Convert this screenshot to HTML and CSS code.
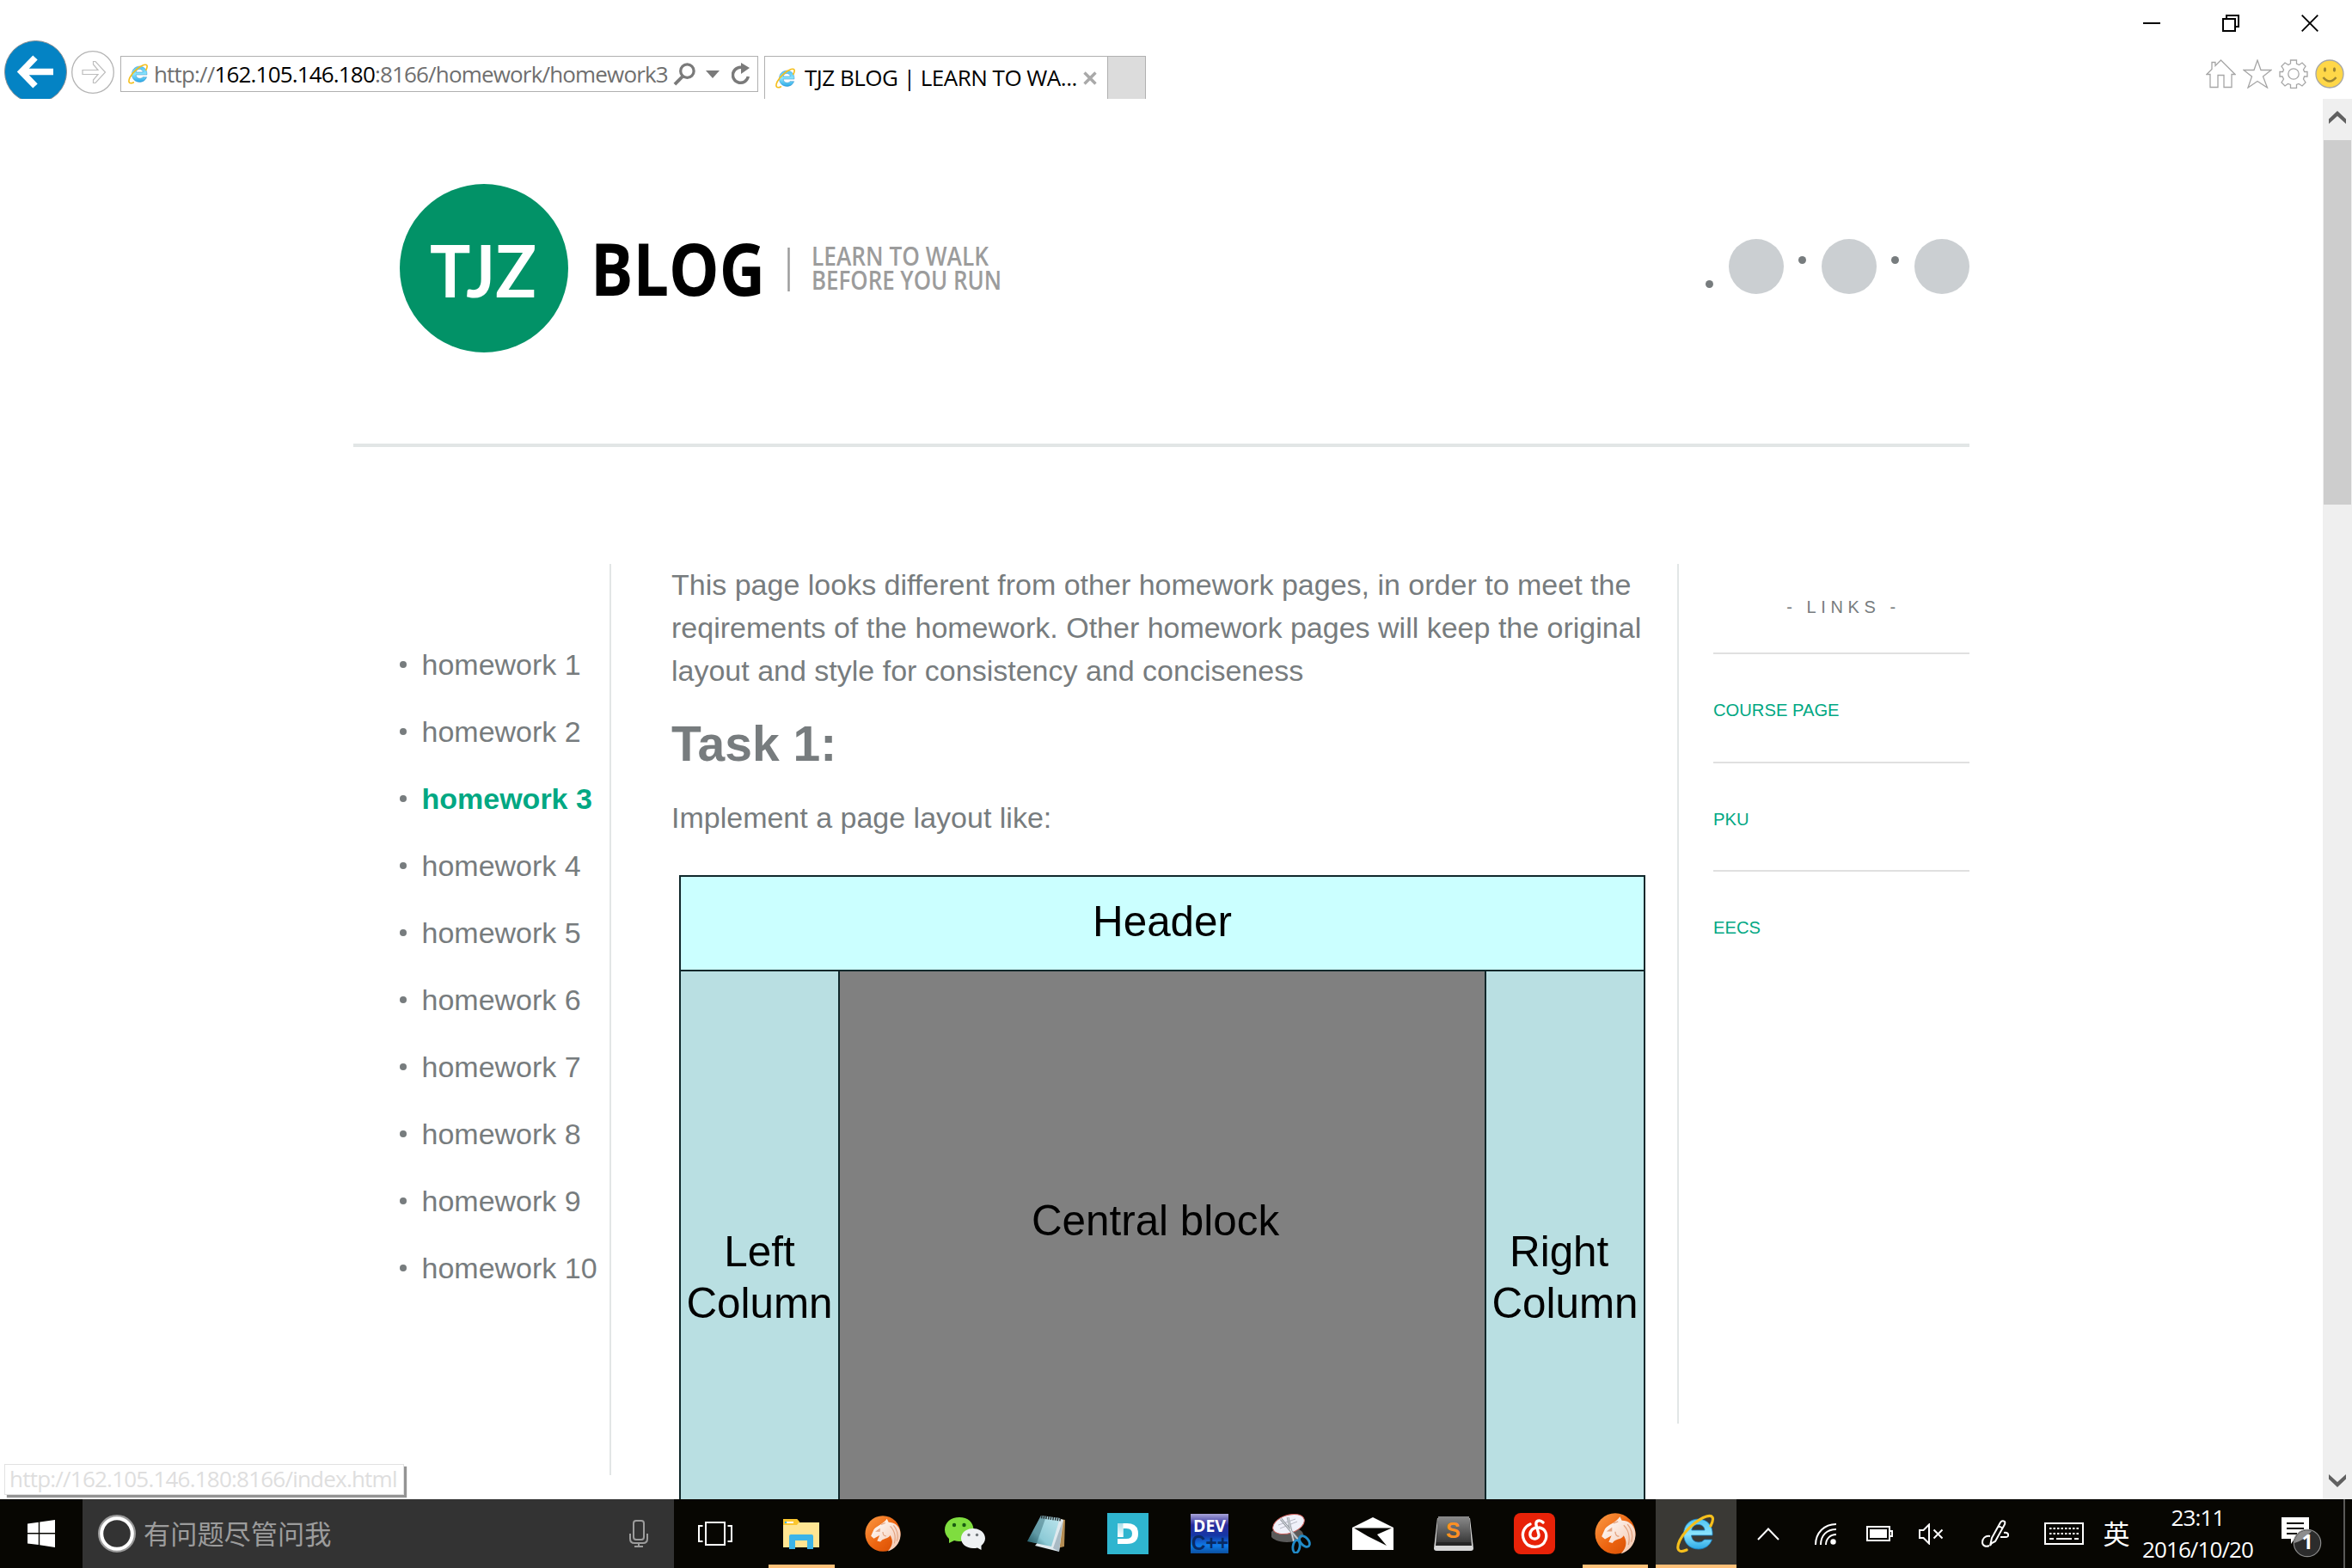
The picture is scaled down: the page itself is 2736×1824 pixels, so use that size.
FILE: index.html
```html
<!DOCTYPE html>
<html lang="en">
<head>
<meta charset="utf-8">
<title>TJZ BLOG | LEARN TO WALK BEFORE YOU RUN</title>
<link rel="stylesheet" href="styles.css">
</head>
<body>
<svg width="0" height="0" class="defs">
  <defs>
    <linearGradient id="ie-blue" x1="0" y1="0" x2="0" y2="1"><stop offset="0" stop-color="#4fc3f2"/><stop offset=".5" stop-color="#8be4fd"/><stop offset="1" stop-color="#2ba9e6"/></linearGradient>
    <linearGradient id="horse-bg" x1="0" y1="0" x2="1" y2="1"><stop offset="0" stop-color="#fb9b45"/><stop offset=".55" stop-color="#ec6410"/><stop offset="1" stop-color="#d34a02"/></linearGradient>
    <linearGradient id="mane" x1="0" y1="0" x2="1" y2="1"><stop offset="0" stop-color="#ffffff"/><stop offset="1" stop-color="#f3c3a8"/></linearGradient>
    <linearGradient id="note" x1="0" y1="1" x2="1" y2="0"><stop offset="0" stop-color="#1d5863"/><stop offset=".35" stop-color="#8ccad6"/><stop offset="1" stop-color="#bfe6ee"/></linearGradient>
    <linearGradient id="dev" x1="0" y1="0" x2="0" y2="1"><stop offset="0" stop-color="#a9a4d8"/><stop offset=".28" stop-color="#2b2b9c"/><stop offset=".55" stop-color="#1538a6"/><stop offset=".8" stop-color="#0f7be8"/><stop offset="1" stop-color="#0b4f9f"/></linearGradient>
    <linearGradient id="subl" x1="0" y1="0" x2="0" y2="1"><stop offset="0" stop-color="#8b8b8b"/><stop offset="1" stop-color="#3a3a3a"/></linearGradient>
    <linearGradient id="dgrad" x1="0" y1="0" x2="0" y2="1"><stop offset="0" stop-color="#a9dfea"/><stop offset="1" stop-color="#fff"/></linearGradient>
    <symbol id="ie" viewBox="0 0 46 46">
      <path d="M42 25H17.500C18 30 21 33 26 33C29 33 31 32 32.500 30H41.500C39 37 33 41 26 41C15.500 41 8.500 34 8.500 23.500C8.500 13 16 6 25.500 6C36 6 43 14 42 25ZM17.800 19H33C32.500 15 30 12.500 25.500 12.500C21 12.500 18.500 15 17.800 19Z" fill="url(#ie-blue)" stroke="#1b7fc0" stroke-width=".8"/>
      <path d="M40 14C45 4 42 1 35 3C25 6 10 19 4 31C-1 42 3 46 12 42" fill="none" stroke="#f5bf1c" stroke-width="3.200" stroke-linecap="round"/>
    </symbol>
    <symbol id="horse" viewBox="0 0 44 44">
      <ellipse cx="22" cy="22" rx="21.500" ry="21.800" fill="url(#horse-bg)"/>
      <path d="M27 4L29 8C38 8 44 15 43.500 24C43 34 36 41 28 43.500C34 37 35 31 31 24C28 29 22 27 19 32L15 31L18 24L11 28L7.500 25L11 17C15 12 22 11 27 4Z" fill="url(#mane)"/>
      <path d="M14.500 19l3.500-2.500v2.500zM20 11L25 9M31 13C36 18 38 26 36 34M35 12C40 18 41 25 39 31M22 20C22 23 23 25 26 25" fill="none" stroke="#e3a380" stroke-width="1.200"/>
    </symbol>
  </defs>
</svg>

<header class="chrome">
  <div class="caption">
    <svg class="win" viewBox="0 0 20 20"><path d="M0 10h20" stroke="#000" stroke-width="2"/></svg>
    <svg class="win" viewBox="0 0 20 20"><path d="M1 5h14v14H1zM5 5V1h14v13h-4" fill="none" stroke="#000" stroke-width="2"/></svg>
    <svg class="win" viewBox="0 0 20 20"><path d="M.7.7l18.600 18.600M19.300.7L.7 19.300" stroke="#000" stroke-width="1.800"/></svg>
  </div>
  <div class="navrow">
    <svg class="back" viewBox="0 0 73 73"><circle cx="36.500" cy="36.500" r="36" fill="#0483c4" stroke="#8a8f92"/><path d="M57 36.500H20M36 20L20 36.500L36 53" fill="none" stroke="#fff" stroke-width="7.500"/></svg>
    <svg class="forward" viewBox="0 0 50 50"><circle cx="25" cy="25" r="24.300" fill="#fff" stroke="#b4b4b4" stroke-width="1.300"/><path d="M13 22.500H31L25.500 16V12.500H28L39.500 25L28 37.500H25.500V34L31 27.500H13Z" fill="#fff" stroke="#bdbdbd" stroke-width="1.200"/></svg>
    <div class="address">
      <svg class="fav" viewBox="0 0 46 46"><use href="#ie"/></svg>
      <span class="url">http://<b>162.105.146.180</b>:8166/homework/homework3</span>
      <svg class="search" viewBox="0 0 28 28"><circle cx="17" cy="10" r="8" fill="none" stroke="#7a7a7a" stroke-width="3.400"/><path d="M12 16L2 26" stroke="#7a7a7a" stroke-width="4"/></svg>
      <svg class="caret" viewBox="0 0 16 9"><path d="M0 0h16L8 9z" fill="#7a7a7a"/></svg>
      <svg class="reload" viewBox="0 0 22 26"><path d="M14 6A9 9 0 1 0 19.300 16" fill="none" stroke="#7a7a7a" stroke-width="3.500"/><path d="M11 0L21 6L11 13z" fill="#7a7a7a"/></svg>
    </div>
    <div class="tab">
      <svg class="fav" viewBox="0 0 46 46"><use href="#ie"/></svg>
      <span class="tabtitle">TJZ BLOG | LEARN TO WA...</span>
      <svg class="tabx" viewBox="0 0 16 16"><path d="M1.500 1.500l13 13M14.500 1.500l-13 13" stroke="#a9a9a9" stroke-width="3.400"/></svg>
    </div>
    <div class="newtab"></div>
    <div class="tools">
      <svg width="35" height="34" viewBox="0 0 35 34"><path d="M17.500 1L34 17.500H30V32.500H21V18.500H14V32.500H5V17.500H1L7 11.500V3.500H11V7.500Z"/></svg>
      <svg width="34" height="34" viewBox="0 0 34 34"><path d="M17 1L21 12.500H33L23.500 20L28.500 33L17 25.500L6 33L10.500 20L1 12.500H13Z"/></svg>
      <svg width="34" height="34" viewBox="0 0 34 34"><path d="M13.500 1h7v4l3 1.500 3.500-2.500 4 4-2.500 4 1.200 2.500H33v5.500h-3.500l-1 3 2.500 4-4 4-4-2.500-2.500 1v4h-7v-4l-3-1-3.500 2.500-4-4 2.500-4-1.500-3H1v-5.500h3.500L5.500 12 3 8l4-4 4 2.500 2.500-1.500z"/><circle cx="17" cy="17" r="6.200"/></svg>
      <svg width="34" height="34" viewBox="0 0 34 34"><circle cx="17" cy="17" r="16" class="face"/><path d="M9.500 21Q17 30 24.500 21" class="smile"/><ellipse cx="11.500" cy="12" rx="1.600" ry="2.800" class="eye"/><ellipse cx="22.500" cy="12" rx="1.600" ry="2.800" class="eye"/></svg>
    </div>
  </div>
</header>

<div class="viewport">
  <div class="page">
    <header class="masthead">
      <svg class="logo" viewBox="0 0 710 196" width="710" height="196">
        <circle cx="98" cy="98" r="98" fill="#029267"/>
        <text class="tjz" x="35" y="132" font-size="84" fill="#fff" textLength="124" lengthAdjust="spacingAndGlyphs">TJZ</text>
        <text x="222" y="130" font-size="84" font-weight="700" fill="#000" textLength="203" lengthAdjust="spacingAndGlyphs">BLOG</text>
        <path d="M452.500 74v51" stroke="#9c9c9c" stroke-width="2.500"/>
        <text x="479" y="95" font-size="31" font-weight="600" fill="#9c9c9c" textLength="206" lengthAdjust="spacingAndGlyphs">LEARN TO WALK</text>
        <text x="479" y="123" font-size="31" font-weight="600" fill="#9c9c9c" textLength="221" lengthAdjust="spacingAndGlyphs">BEFORE YOU RUN</text>
      </svg>
      <div class="social">
        <i class="low"></i><span></span><i></i><span></span><i></i><span></span>
      </div>
    </header>
    <div class="columns">
      <nav class="side">
        <ul>
          <li>homework 1</li>
          <li>homework 2</li>
          <li class="current"><b>homework 3</b></li>
          <li>homework 4</li>
          <li>homework 5</li>
          <li>homework 6</li>
          <li>homework 7</li>
          <li>homework 8</li>
          <li>homework 9</li>
          <li>homework 10</li>
        </ul>
      </nav>
      <main>
        <p>This page looks different from other homework pages, in order to meet the<br>reqirements of the homework. Other homework pages will keep the original<br>layout and style for consistency and conciseness</p>
        <h1>Task 1:</h1>
        <p>Implement a page layout like:</p>
        <div class="diagram">
          <div class="d-head">Header</div>
          <div class="d-side">Left<br>Column</div>
          <div class="d-mid">Central block</div>
          <div class="d-side">Right&nbsp;<br>Column</div>
        </div>
      </main>
      <aside class="links">
        <h2>- LINKS -</h2>
        <a>COURSE PAGE</a>
        <a>PKU</a>
        <a>EECS</a>
      </aside>
    </div>
    <div class="status">http://162.105.146.180:8166/index.html</div>
  </div>
  <div class="scrollbar">
    <svg width="20" height="15" viewBox="0 0 20 15"><path d="M0 15V9.500L10 0l10 9.500V15L10 6z" fill="#606060"/></svg>
    <div class="thumb"></div>
    <svg class="down" width="20" height="15" viewBox="0 0 20 15"><path d="M0 0v5.500L10 15l10-9.500V0L10 9z" fill="#606060"/></svg>
  </div>
</div>

<footer class="taskbar">
  <div class="start"><svg width="32" height="32" viewBox="0 0 32 32"><path d="M0 4.500L12.800 2.800V15H0zM14.200 2.500L32 0V15H14.200zM0 16.500H12.800V29L0 27.500zM14.200 16.500H32V32L14.200 29.300z" fill="#fff"/></svg></div>
  <div class="cortana">
    <svg width="44" height="44" viewBox="0 0 44 44"><circle cx="22" cy="22" r="19.500" fill="none" stroke="#9a9a9a" stroke-width="5"/><circle cx="22" cy="22" r="17.800" fill="none" stroke="#fff" stroke-width="4"/></svg>
    <span>有问题尽管问我</span>
    <svg class="mic" width="22" height="32" viewBox="0 0 22 32"><rect x="5" y="1" width="12" height="22" rx="3" fill="none" stroke="#9c9c9c" stroke-width="2"/><path d="M1 16v6q0 5 5 5h10q5 0 5-5v-6M11 27v4M6 31h10" fill="none" stroke="#9c9c9c" stroke-width="2"/></svg>
  </div>
  <div class="taskview"><svg width="40" height="28" viewBox="0 0 40 28"><path d="M9 1h22v26H9zM5.500 5H1v18h4.500M34.500 5H39v18h-4.500" fill="none" stroke="#fff" stroke-width="2"/></svg></div>
  <div class="app run"><svg width="42" height="35" viewBox="0 0 42 35"><path d="M0 0h16l3 4h23v29H0z" fill="#ffe592"/><path d="M0 0h16l3 3-3 4H0z" fill="#fbc62f"/><path d="M2 3h10v2H2z" fill="#fff"/><path d="M2 3h2v2H2z" fill="#35b6e0"/><path d="M7 35V20q0-2 2-2h24q2 0 2 2v15h-7V25H14v10z" fill="#3cb4e8"/></svg></div>
  <div class="app"><svg width="42" height="42" viewBox="0 0 44 44"><use href="#horse"/></svg></div>
  <div class="app"><svg width="47" height="38" viewBox="0 0 47 38"><path d="M17 0C27 0 33.500 6 33.500 14.500S27 28 17 28C15 28 13 27.500 11 27L5 30V25C2 22 0 19 0 14.500C0 6 7 0 17 0Z" fill="#7fdd3f"/><circle cx="11" cy="9" r="2.200" fill="#1a5c12"/><circle cx="22.500" cy="9" r="2.200" fill="#1a5c12"/><path d="M33 13C41 13 47 18 47 24.500C47 28 45 31 42.500 33V38L38 35.500Q36 36 33 36C25 36 19 31 19 24.500S25 13 33 13Z" fill="#eef1f3"/><circle cx="28" cy="20.500" r="1.700" fill="#707679"/><circle cx="37.500" cy="20.500" r="1.700" fill="#707679"/></svg></div>
  <div class="app"><svg width="44" height="44" viewBox="0 0 44 44"><path d="M38 5l6 1-1 31-8 2z" fill="#b38c53"/><path d="M36 4l6 2-5 37-28-7z" fill="#dfe9ee"/><path d="M41 8L30 39l7 4z" fill="#a9bac4"/><path d="M16 1L38 4L28 37L0 31Z" fill="url(#note)"/><path d="M16 1L22 2L11 33L0 31Z" fill="#12434e" opacity=".35"/><path d="M16 2.500L40 6" stroke="#2c3336" stroke-width="3.500" stroke-dasharray="1.500 1.200"/></svg></div>
  <div class="app"><svg width="48" height="48" viewBox="0 0 48 48"><path d="M0 0h48v48H0z" fill="#2fb5cf"/><path d="M12 12H23Q36 12 36 24T23 36H12V30H22Q29 30 29 24T22 18H18.500V28H12Z" fill="#fff"/><path d="M12 12H18.500V28H12Z" fill="url(#dgrad)"/></svg></div>
  <div class="app"><svg width="44" height="46" viewBox="0 0 44 46"><path d="M0 0h44v46H0z" fill="url(#dev)"/><text x="1" y="42" font-family="Liberation Sans,sans-serif" font-weight="700" font-size="23" fill="#092a63" textLength="43" lengthAdjust="spacingAndGlyphs">C++</text><text x="3" y="21" font-family="Open Sans,sans-serif" font-weight="700" font-size="20" fill="#fff" textLength="38" lengthAdjust="spacingAndGlyphs">DEV</text></svg></div>
  <div class="app"><svg width="47" height="46" viewBox="0 0 47 46"><ellipse cx="18" cy="24" rx="19" ry="9" fill="#5a5a5a"/><ellipse cx="20" cy="12" rx="19" ry="10.500" transform="rotate(-18 20 12)" fill="#f0f1fa" stroke="#c9605c"/><path d="M8 13l20-7M10 17l20-8" stroke="#b7b9c4"/><path d="M11 6L32 31M19 4L26 32" stroke="#959ba3" stroke-width="2.800"/><path d="M11 6L32 31M19 4L26 32" stroke="#e4e7ea" stroke-width="1"/><ellipse cx="38.500" cy="32" rx="4.500" ry="7.500" transform="rotate(-42 38.500 32)" fill="none" stroke="#218bc8" stroke-width="2.800"/><ellipse cx="29" cy="38" rx="4" ry="7.500" transform="rotate(8 29 38)" fill="none" stroke="#218bc8" stroke-width="2.800"/></svg></div>
  <div class="app"><svg width="48" height="38" viewBox="0 0 48 38"><path d="M0 12L24 0L48 12V38H0z" fill="#fff"/><path d="M2 12.500H46L29 20L40 33L18 22z" fill="#070602"/></svg></div>
  <div class="app"><svg width="46" height="40" viewBox="0 0 46 40"><path d="M4 2h38l4 35q0 3-3 3H3q-3 0-3-3z" fill="#d7d7d7"/><path d="M5 0h36l3 34H2z" fill="#262626"/><path d="M5 0h36l2 30H3z" fill="url(#subl)"/><text x="14" y="25" font-family="Liberation Sans,sans-serif" font-weight="700" font-size="25" fill="#ff9022">S</text></svg></div>
  <div class="app"><svg width="48" height="48" viewBox="0 0 48 48"><rect width="48" height="48" rx="8" fill="#e82208"/><path d="M34 11C30 7 25 9 26 14L29 25C30 31 20 32 19 26C18 20 24 16 29 17C37 18 39 25 37 31C33 42 17 42 12 32C8 24 12 16 19 13" fill="none" stroke="#fff" stroke-width="3.300" stroke-linecap="round"/></svg></div>
  <div class="app run"><svg width="48" height="48" viewBox="0 0 44 44"><use href="#horse"/></svg></div>
  <div class="app run active"><svg width="46" height="46" viewBox="0 0 46 46"><use href="#ie"/></svg></div>
  <div class="tray">
    <svg class="t1" width="26" height="15" viewBox="0 0 26 15"><path d="M1 14L13 1.500L25 14"/></svg>
    <svg class="t2" width="25" height="25" viewBox="0 0 25 25"><path d="M1 25C1 11 11 1 25 1M7 25C7 14 14 7 25 7M13 25C13 18 18 13 25 13" /><circle cx="21.500" cy="21.500" r="3.200" fill="#fff" stroke="none"/></svg>
    <svg class="t3" width="31" height="18" viewBox="0 0 31 18"><path d="M1 1h26v16H1zM27.500 6H30v6h-2.500"/><path d="M4 4h20v10H4z" fill="#fff" stroke="none"/></svg>
    <svg class="t4" width="29" height="25" viewBox="0 0 29 25"><path d="M1 8h4.500L12 1.500v22L5.500 17H1zM17.500 7.500l10 10M27.500 7.500l-10 10"/></svg>
    <svg class="t5" width="32" height="32" viewBox="0 0 32 32"><path d="M12 27L10 30L12 21L22 3Q24 0 27 2Q28 4 26 7L16 25ZM20 7l5 3M10 19C4 18 1 22 1 26C1 30 5 32 9 30M26 15C32 14 33 20 28 20H22"/></svg>
    <svg class="t6" width="46" height="26" viewBox="0 0 46 26"><path d="M1 1h44v24H1z"/><path d="M6 7h34M6 13h34" stroke-dasharray="2.500 2"/><path d="M6 19h5M14 19h18M35 19h5"/></svg>
    <span class="ime">英</span>
    <div class="clock"><span>23:11</span><span>2016/10/20</span></div>
    <svg class="t8" width="48" height="48" viewBox="0 0 48 48"><path d="M0 1h32v25H15l-4 6v-6H0z" fill="#fff" stroke="none"/><path d="M6 8h20M6 14h20M6 20h12" stroke="#070602"/><circle cx="30" cy="31" r="15.700" fill="#2c2c2c" stroke="#8a8a8a" stroke-width="1.200"/><path d="M15 31a15 15 0 0 1 20-14Q28 27 15 31" fill="#8d8d8d" stroke="none"/><text x="23.500" y="38" font-family="Open Sans,sans-serif" font-weight="700" font-size="23" fill="#fff" stroke="none">1</text></svg>
    <div class="peek"></div>
  </div>
</footer>
</body>
</html>
```

FILE: styles.css
```css
* { box-sizing: border-box; }
body {
  margin: 0; width: 2736px; height: 1824px; overflow: hidden;
  display: flex; flex-direction: column; background: #fff;
  font-family: "Liberation Sans", Arial, sans-serif; color: #777c7e;
}
svg { display: block; flex: none; }
.defs { position: absolute; }
b { font-weight: inherit; }

/* Browser chrome */
.chrome { flex: none; height: 115px; font-family: "Open Sans", "Noto Sans", sans-serif; font-size: 26px; }
.caption { height: 47px; display: flex; justify-content: flex-end; gap: 72px; padding: 17px 39px 0 0; }
.win { width: 20px; height: 20px; }
.navrow { height: 68px; display: flex; align-items: flex-start; overflow: hidden; padding-left: 5px; }
.back { width: 73px; height: 73px; }
.forward { width: 50px; height: 50px; margin: 12px 0 0 5px; }
.address {
  margin: 18px 0 0 7px; width: 742px; height: 42px; border: 1px solid #b0b0b0;
  display: flex; align-items: center; padding-left: 8px;
}
.fav { width: 24px; height: 24px; }
.url { width: 600px; margin-left: 6px; letter-spacing: -.83px; white-space: nowrap; color: #6f6f6f; line-height: 38px; }
.url b { color: #000; }
.search { width: 27px; height: 27px; margin-left: 4px; }
.caret { width: 16px; height: 9px; margin-left: 11px; }
.reload { width: 22px; height: 26px; margin-left: 14px; }
.tab {
  margin: 18px 0 0 7px; width: 400px; height: 50px; border: 1px solid #b0b0b0; border-bottom: 0;
  display: flex; align-items: center; padding-left: 12px;
}
.tabtitle { width: 322px; margin-left: 10px; color: #000; white-space: nowrap; letter-spacing: -.5px; line-height: 46px; padding-bottom: 2px; }
.tabx { width: 16px; height: 16px; margin-left: 2px; }
.newtab { margin-top: 18px; width: 44px; height: 50px; background: #dcdcdc; border: 1px solid #b0b0b0; border-width: 1px 1px 0 0; }
.tools { margin: 22px 9px 0 auto; display: flex; gap: 8px; }
.tools svg * { fill: #fff; stroke: #a6a6a6; stroke-width: 1.300px; }
.tools svg .face { fill: #ffd748; }
.tools svg .smile { fill: none; stroke: #9c8534; stroke-width: 2.600px; }
.tools svg .eye { fill: #9c8534; stroke: none; }

/* Page */
.viewport { flex: none; height: 1629px; display: flex; overflow: hidden; }
.page { width: 2702px; height: 1629px; position: relative; overflow: hidden; }
.masthead {
  margin-left: 411px; width: 1880px; height: 405px; border-bottom: 4px solid #e2e6e6;
  display: flex; justify-content: space-between; padding: 99px 0 0 54px;
}
.logo { font-family: "Open Sans", "Noto Sans", sans-serif; overflow: visible; }
.tjz { font-family: Lato, sans-serif; font-weight: 700; }
.social { display: flex; height: 64px; margin-top: 64px; }
.social span { width: 64px; height: 64px; border-radius: 50%; background: #cbcfd2; }
.social i { width: 9px; height: 9px; border-radius: 50%; background: #777c7e; margin: 20px 18px 0 17px; }
.social .low { margin-top: 48px; }
.columns { display: flex; align-items: flex-start; margin: 136px 0 0 411px; width: 1880px; font-size: 34px; }
.side { width: 300px; height: 1060px; border-right: 2px solid #e2e6e6; padding: 78px 0 0 54px; }
.side ul { list-style: none; margin: 0; padding: 0; }
.side li { height: 78.050px; display: flex; align-items: center; white-space: nowrap; }
.side li::before { content: ""; width: 8px; height: 8px; border-radius: 50%; background: #777c7e; margin-right: 17.500px; }
.side .current b { font-weight: 700; color: #02a883; }
main { width: 1134px; margin: -1px 0 0 69px; }
main p { margin: 0 0 0 1px; line-height: 50px; white-space: nowrap; }
main h1 { margin: 0 0 0 1px; font-size: 57px; line-height: 121px; }
.diagram {
  margin: 42px 0 0 10px; width: 1124px; height: 900px; border: 2px solid #10282b;
  display: grid; grid-template: 108px 1fr / 183px 1fr 183px; gap: 2px; background: #10282b;
  color: #000; font-size: 49.400px; line-height: 60px; text-align: center;
}
.d-head { grid-column: 1 / 4; background: #cbffff; padding-top: 22px; }
.d-side { background: #b9dfe2; padding-top: 296px; }
.d-mid { background: #808080; padding-top: 260px; padding-right: 16px; }
.links { width: 340px; height: 1000px; margin-left: 37px; border-left: 2px solid #e2e6e6; padding-left: 40px; font-size: 20.200px; }
.links h2 { margin: 0; height: 103px; line-height: 101px; font-size: 20px; font-weight: 400; text-align: center; letter-spacing: 5.600px; padding-left: 5px; }
.links a { display: block; border-top: 2px solid #e0e0e0; height: 126.700px; line-height: 130px; color: #02a883; }
.status {
  position: absolute; left: 5px; top: 1588px; width: 465px; height: 36px; border: 1px solid #e2e2e2; background: #fff;
  box-shadow: 3px 3px 1px #949494; font: 26px/32px "Open Sans", "Noto Sans", sans-serif; color: #dedede;
  padding-left: 5px; letter-spacing: -.78px; white-space: nowrap;
}
.scrollbar { width: 34px; background: #efefef; display: flex; flex-direction: column; align-items: center; padding: 14px 1px 14px 0; }
.thumb { width: 32px; height: 424px; margin-top: 19px; background: #cdcdcd; }
.down { margin-top: auto; }

/* Taskbar */
.taskbar { flex: none; height: 80px; display: flex; background: #070602; color: #fff; }
.taskbar > div { display: flex; align-items: center; flex: none; }
.start { width: 96px; justify-content: center; }
.cortana { width: 688px; background: #333; padding-left: 18px; }
.cortana span { margin-left: 9px; width: 560px; font: 31.200px/44px "Noto Sans CJK SC", sans-serif; color: #9c9c9c; padding-bottom: 2px; }
.cortana .mic { margin-left: 5px; }
.taskview { width: 100.500px; padding-left: 28px; }
.app { width: 95px; justify-content: center; position: relative; }
.app:nth-child(n+11) { width: 94px; }
.taskbar > .run::after { content: ""; position: absolute; left: 9px; right: 9px; bottom: 0; height: 4px; background: #fdc078; }
.taskbar > .active { background: #3a3935; }
.taskbar > .active::after { left: 0; right: 0; }
.tray svg { fill: none; stroke: #fff; stroke-width: 2px; }
.t1 { margin-left: 24px; }
.t2 { margin-left: 41px; }
.t3 { margin-left: 35px; }
.t4 { margin-left: 30px; }
.t5 { margin-left: 44px; }
.t6 { margin-left: 41px; }
.ime { margin-left: 23px; width: 31px; font: 31px/44px "Noto Sans CJK SC", sans-serif; padding-bottom: 2px; }
.clock { margin-left: 14px; width: 130px; display: flex; flex-direction: column; align-items: center; font: 26px/37px "Open Sans", "Noto Sans", sans-serif; letter-spacing: -.9px; white-space: nowrap; }
.t8 { margin: 8px 0 0 32px; }
.peek { margin-left: 24px; width: 2px; height: 80px; background: #5a5a58; }
```
